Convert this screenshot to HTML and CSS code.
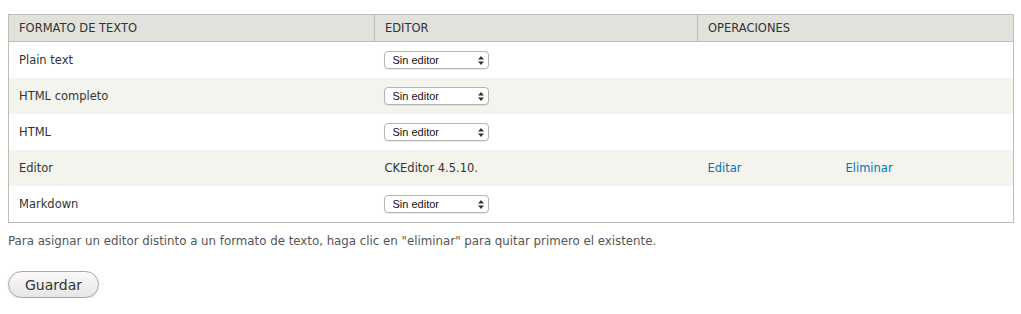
FILE: index.html
```html
<!DOCTYPE html>
<html lang="es">
<head>
  <meta charset="UTF-8" />
  <title>Editores de texto</title>
  <link rel="stylesheet" href="styles.css">
</head>
<body>
  <form class="editor-form">
    <table class="formats">
      <thead>
        <tr>
          <th class="col-format">Formato de texto</th>
          <th class="col-editor">Editor</th>
          <th colspan="2">Operaciones</th>
        </tr>
      </thead>
      <tbody>
        <tr>
          <td>Plain text</td>
          <td><span class="select-wrap"><select><option>Sin editor</option></select><svg class="arrows" width="6" height="9" viewBox="0 0 6 9"><path d="M0 3.5L3 0L6 3.5Z M0 5.5L3 9L6 5.5Z" fill="#333"/></svg></span></td>
          <td class="op-a"></td>
          <td></td>
        </tr>
        <tr class="even">
          <td>HTML completo</td>
          <td><span class="select-wrap"><select><option>Sin editor</option></select><svg class="arrows" width="6" height="9" viewBox="0 0 6 9"><path d="M0 3.5L3 0L6 3.5Z M0 5.5L3 9L6 5.5Z" fill="#333"/></svg></span></td>
          <td class="op-a"></td>
          <td></td>
        </tr>
        <tr>
          <td>HTML</td>
          <td><span class="select-wrap"><select><option>Sin editor</option></select><svg class="arrows" width="6" height="9" viewBox="0 0 6 9"><path d="M0 3.5L3 0L6 3.5Z M0 5.5L3 9L6 5.5Z" fill="#333"/></svg></span></td>
          <td class="op-a"></td>
          <td></td>
        </tr>
        <tr class="even">
          <td>Editor</td>
          <td>CKEditor 4.5.10.</td>
          <td class="op-a"><a href="#">Editar</a></td>
          <td><a href="#">Eliminar</a></td>
        </tr>
        <tr>
          <td>Markdown</td>
          <td><span class="select-wrap"><select><option>Sin editor</option></select><svg class="arrows" width="6" height="9" viewBox="0 0 6 9"><path d="M0 3.5L3 0L6 3.5Z M0 5.5L3 9L6 5.5Z" fill="#333"/></svg></span></td>
          <td class="op-a"></td>
          <td></td>
        </tr>
      </tbody>
    </table>

    <p class="help">Para asignar un editor distinto a un formato de texto, haga clic en "eliminar" para quitar primero el existente.</p>

    <button type="button" class="save-btn">Guardar</button>
  </form>
</body>
</html>
```

FILE: styles.css
```css
body {
  margin: 0;
  padding: 14px 7px 0 8px;
  background: #fff;
  color: #333;
  font-family: "DejaVu Sans", sans-serif;
}
table.formats {
  width: 100%;
  border-collapse: collapse;
  border: 1px solid #bfbfba;
  font-size: 11.5px;
}
.formats th {
  background: #e1e2dc;
  text-align: left;
  font-weight: normal;
  text-transform: uppercase;
  height: 26px;
  padding: 0 10px;
  border-bottom: 1px solid #bfbfba;
  border-right: 1px solid #bfbfba;
}
.formats th.col-format {
  width: 345px;
}
.formats th.col-editor {
  width: 302px;
}
.formats td {
  height: 36px;
  padding: 0 10px;
}
.formats td.op-a {
  width: 118px;
}
.formats tr.even td {
  background: #f3f4ee;
}
.formats a {
  color: #0074bd;
  text-decoration: none;
}
.select-wrap {
  position: relative;
  display: inline-block;
  vertical-align: middle;
  margin-left: -1px;
}
.select-wrap select {
  appearance: none;
  -webkit-appearance: none;
  width: 105px;
  height: 18px;
  padding: 0 0 0 8px;
  border: 1px solid #b4b4b4;
  border-radius: 4px;
  background: #fff;
  font-family: "Liberation Sans", Arial, sans-serif;
  font-size: 11px;
  color: #111;
  box-shadow: 0 1px 1px rgba(0,0,0,0.08);
}
.select-wrap .arrows {
  position: absolute;
  right: 5px;
  top: 5px;
  pointer-events: none;
}
.help {
  margin: 11px 0 0;
  font-size: 11.8px;
  color: #555;
}
.save-btn {
  margin-top: 23px;
  width: 91px;
  height: 27px;
  border: 1px solid #a6a6a6;
  border-radius: 14px;
  background: linear-gradient(#fafafa, #e6e6e6);
  color: #333;
  font-family: "DejaVu Sans", sans-serif;
  font-size: 14px;
  box-shadow: 0 1px 2px rgba(0,0,0,0.12);
  cursor: pointer;
}
```
